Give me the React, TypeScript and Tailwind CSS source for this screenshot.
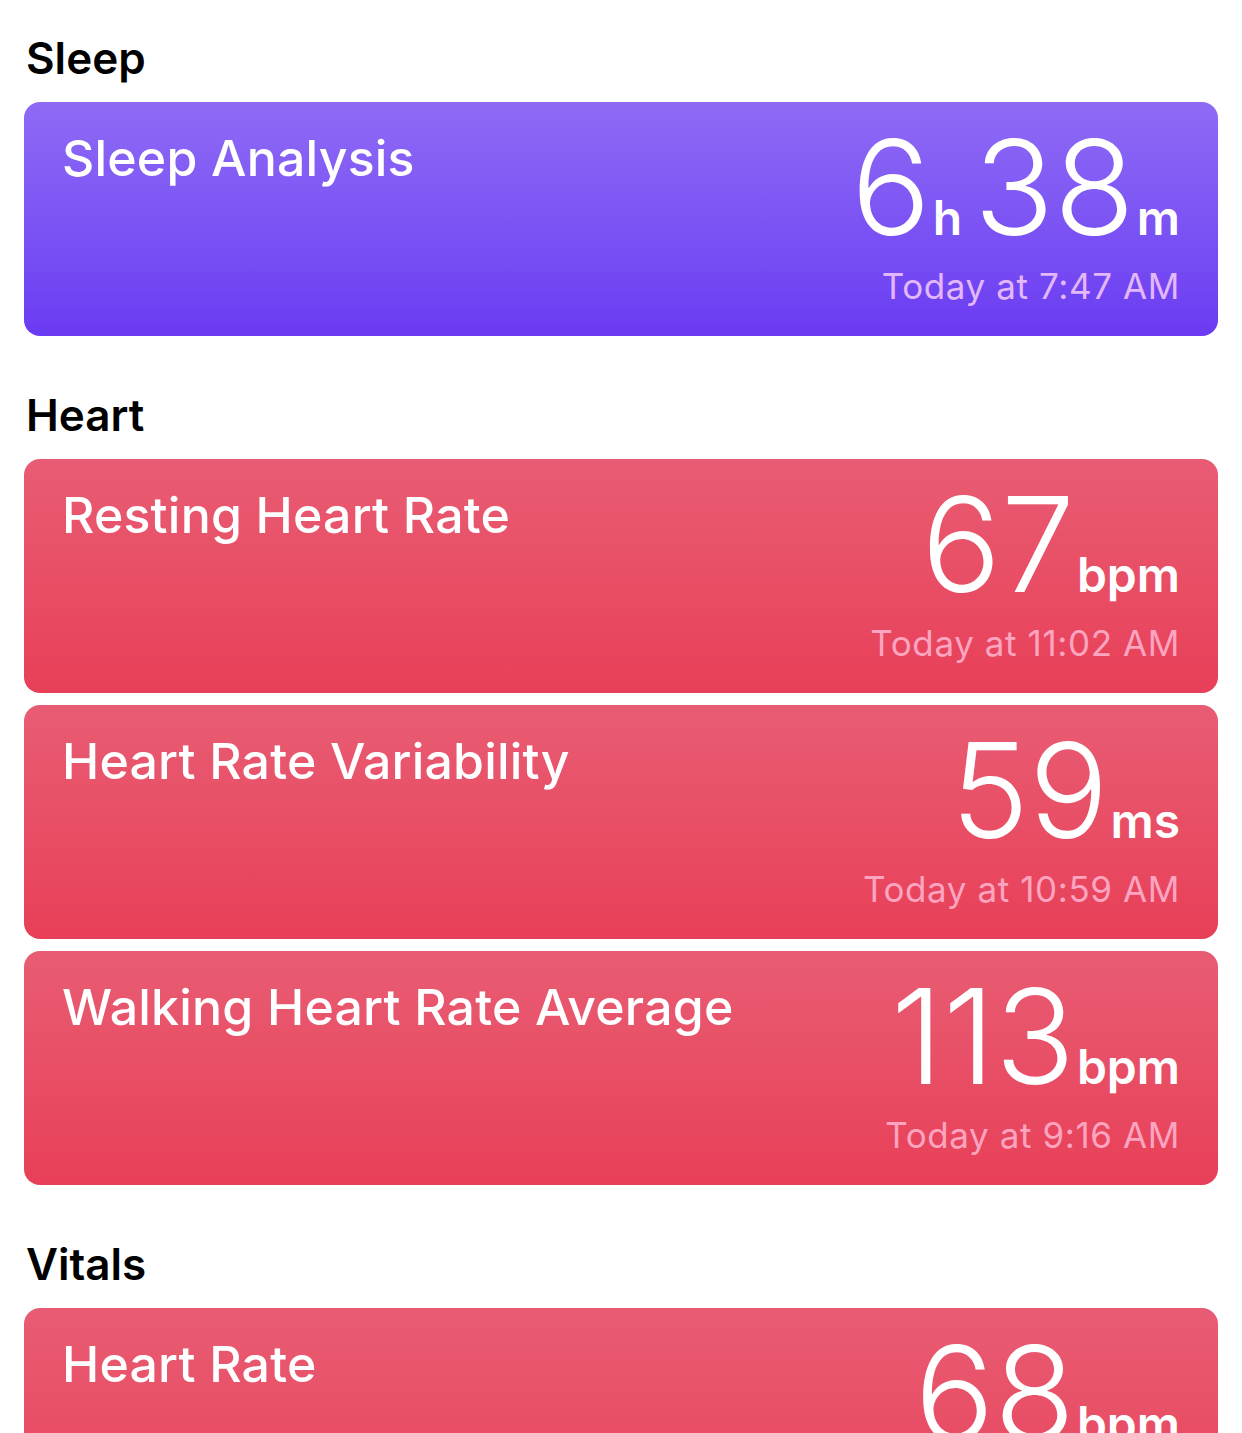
type Metric = {
    title: string;
    parts: { value: string; unit: string }[];
    time?: string;
    tone: "purple" | "red";
};

const sleep: Metric[] = [
    { title: "Sleep Analysis", parts: [{ value: "6", unit: "h" }, { value: "38", unit: "m" }], time: "Today at 7:47 AM", tone: "purple" },
];

const heart: Metric[] = [
    { title: "Resting Heart Rate", parts: [{ value: "67", unit: "bpm" }], time: "Today at 11:02 AM", tone: "red" },
    { title: "Heart Rate Variability", parts: [{ value: "59", unit: "ms" }], time: "Today at 10:59 AM", tone: "red" },
    { title: "Walking Heart Rate Average", parts: [{ value: "113", unit: "bpm" }], time: "Today at 9:16 AM", tone: "red" },
];

const vitals: Metric[] = [
    { title: "Heart Rate", parts: [{ value: "68", unit: "bpm" }], time: "Today at 11:05 AM", tone: "red" },
];

function MetricCard({ metric }: { metric: Metric }) {
    const purple = metric.tone === "purple";
    return (
        <div
            className={
                purple
                    ? "flex justify-between h-[234px] shrink-0 rounded-[16px] px-[38px] pt-[26px] bg-gradient-to-b from-[#8f6af5] to-[#6b3af2] text-white"
                    : "flex justify-between h-[234px] shrink-0 rounded-[16px] px-[38px] pt-[26px] bg-gradient-to-b from-[#e85c73] to-[#e83f58] text-white"
            }
        >
            <div className="text-[50px] font-medium leading-[60px] tracking-[0.2px]">{metric.title}</div>
            <div className="flex flex-col items-end">
                <div className="flex items-baseline gap-[12px] mt-[-1px]">
                    {metric.parts.map((p) => (
                        <div key={p.unit} className="flex items-baseline">
                            <span className="text-[132px] font-light leading-[120px]">{p.value}</span>
                            <span className="text-[48px] font-semibold leading-none ml-[2px]">{p.unit}</span>
                        </div>
                    ))}
                </div>
                <div className={purple ? "text-[35px] leading-[50px] mt-[14px] tracking-[0.6px] text-[#e3b8fa]" : "text-[35px] leading-[50px] mt-[14px] tracking-[0.6px] text-[#fca4c0]"}>
                    {metric.time}
                </div>
            </div>
        </div>
    );
}

function Section({ title, items }: { title: string; items: Metric[] }) {
    return (
        <div className="flex flex-col">
            <div className="text-[44px] font-semibold leading-[56px] text-black px-[2px] mb-[16px]">{title}</div>
            <div className="flex flex-col gap-[12px]">
                {items.map((m) => (
                    <MetricCard key={m.title} metric={m} />
                ))}
            </div>
        </div>
    );
}

export default function App() {
    return (
        <div className="w-[1242px] h-[1433px] overflow-hidden bg-white px-[24px] pt-[30px] font-['Inter',sans-serif]">
            <div className="flex flex-col gap-[51px]">
                <Section title="Sleep" items={sleep} />
                <Section title="Heart" items={heart} />
                <Section title="Vitals" items={vitals} />
            </div>
        </div>
    );
}
